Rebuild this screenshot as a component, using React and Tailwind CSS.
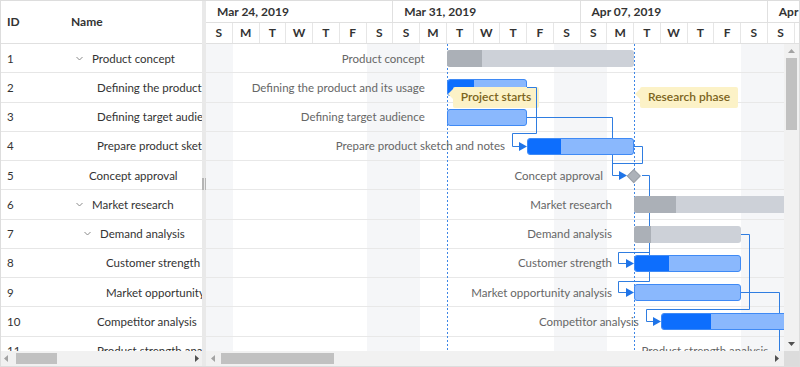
import React from 'react';

// Gantt view: task list on the left, timeline on the right
const DAY = 26.75;
const ROW = 29.25;

const tasks = [
    { id: 1, name: 'Product concept', pad: 'pl-[11px]', chevron: true, type: 'summary', start: 9, end: 16, progress: 1.3 },
    { id: 2, name: 'Defining the product and its usage', pad: 'pl-[32px]', type: 'task', start: 9, end: 12, progress: 0.98 },
    { id: 3, name: 'Defining target audience', pad: 'pl-[32px]', type: 'task', start: 9, end: 12, progress: 0 },
    { id: 4, name: 'Prepare product sketch and notes', pad: 'pl-[32px]', type: 'task', start: 12, end: 16, progress: 1.25 },
    { id: 5, name: 'Concept approval', pad: 'pl-[24px]', type: 'milestone', start: 16 },
    { id: 6, name: 'Market research', pad: 'pl-[11px]', chevron: true, type: 'summary', start: 16, end: 26, progress: 1.57 },
    { id: 7, name: 'Demand analysis', pad: 'pl-[19px]', chevron: true, type: 'summary', start: 16, end: 20, progress: 0.64 },
    { id: 8, name: 'Customer strength', pad: 'pl-[41px]', type: 'task', start: 16, end: 20, progress: 1.27 },
    { id: 9, name: 'Market opportunity analysis', pad: 'pl-[41px]', type: 'task', start: 16, end: 20, progress: 0 },
    { id: 10, name: 'Competitor analysis', pad: 'pl-[32px]', type: 'task', start: 17, end: 24, progress: 1.84 },
    { id: 11, name: 'Product strength analysis', pad: 'pl-[32px]', type: 'task', start: 21.84, end: 26, progress: 0 },
];

const weeks = ['Mar 24, 2019', 'Mar 31, 2019', 'Apr 07, 2019', 'Apr 14, 2019'];
const dayLetters = ['S', 'M', 'T', 'W', 'T', 'F', 'S'];
const days = Array.from({ length: 28 }, (_, i) => dayLetters[i % 7]);
const isWeekend = (i) => i % 7 === 0 || i % 7 === 6;

const center = (i) => ROW * (i + 0.5);

// ─── Small drawings ──────────────────────────────────────────────────────────
const Chevron = () => (
    <svg width="7" height="5" viewBox="0 0 7 5" className="mr-[9px] shrink-0">
        <polyline points="0.5,1 3.5,4 6.5,1" fill="none" stroke="#8a8a8a" strokeWidth="1" />
    </svg>
);

const Arrow = ({ dir, dark }) => {
    const color = dark ? '#505050' : '#a3a3a3';
    const pts = {
        left: '4,0 4,7 0,3.5',
        right: '0,0 0,7 4,3.5',
        up: '0,4 7,4 3.5,0',
        down: '0,0 7,0 3.5,4',
    }[dir];
    const vertical = dir === 'up' || dir === 'down';
    return (
        <svg width={vertical ? 7 : 4} height={vertical ? 4 : 7} className="shrink-0">
            <polygon points={pts} fill={color} />
        </svg>
    );
};

// ─── Left task list ──────────────────────────────────────────────────────────
const TaskList = () => (
    <div className="flex w-[201px] shrink-0 flex-col">
        <div className="flex h-[43px] shrink-0 items-center border-b border-[#e0e0e0] text-[12px] font-bold text-[#333]">
            <div className="w-[64px] shrink-0 pl-[6px]">ID</div>
            <div className="pl-[6px]">Name</div>
        </div>
        <div className="min-h-0 flex-1 overflow-hidden">
            {tasks.map((t) => (
                <div key={t.id} className="flex h-[29.25px] items-center border-b border-[#e6e6e6] text-[11.5px] text-[#333]">
                    <div className="w-[64px] shrink-0 pl-[6px]">{t.id}</div>
                    <div className={`flex min-w-0 flex-1 items-center overflow-hidden whitespace-nowrap ${t.pad}`}>
                        {t.chevron && <Chevron />}
                        <span>{t.name}</span>
                    </div>
                </div>
            ))}
        </div>
        <div className="flex h-[15px] shrink-0 items-center bg-[#f1f1f1] px-[3px]">
            <Arrow dir="left" />
            <div className="ml-[8px] h-[11px] w-[41px] bg-[#c1c1c1]" />
            <div className="flex-1" />
            <Arrow dir="right" dark />
        </div>
    </div>
);

const Splitter = () => (
    <div className="flex w-[4px] shrink-0 items-center justify-center gap-[1px] bg-[#e9e9e9]">
        <div className="h-[12px] w-[1.5px] bg-[#b5b5b5]" />
        <div className="h-[12px] w-[1.5px] bg-[#b5b5b5]" />
    </div>
);

// ─── Timeline pieces ─────────────────────────────────────────────────────────
const TaskBar = ({ t, i }) => {
    const left = t.start * DAY;
    const top = center(i);
    if (t.type === 'milestone') {
        return (
            <div
                className="absolute h-[9.5px] w-[9.5px] rotate-45 border border-[#9da2aa] bg-[#adb2b9]"
                style={{ left: left - 4.75, top: top - 4.75 }}
            />
        );
    }
    const width = (t.end - t.start) * DAY;
    const summary = t.type === 'summary';
    return (
        <div
            className={`absolute flex h-[17px] overflow-hidden rounded-[3px] ${summary ? 'bg-[#cdd1d8]' : 'border border-[#3f8af5] bg-[#8ab8fd]'}`}
            style={{ left, width, top: top - 8.5 }}
        >
            {t.progress > 0 && (
                <div className={`h-full ${summary ? 'bg-[#abb0b7]' : 'bg-[#0d6efd]'}`} style={{ width: t.progress * DAY }} />
            )}
        </div>
    );
};

const TaskLabel = ({ t, i }) => {
    const offset = t.type === 'milestone' ? 31 : 22;
    return (
        <span
            className="absolute -translate-x-full -translate-y-1/2 whitespace-nowrap text-[11.5px] text-[#666]"
            style={{ left: t.start * DAY - offset, top: center(i) }}
        >
            {t.name}
        </span>
    );
};

const Note = ({ className, children }) => (
    <div className={`absolute flex h-[21px] items-center justify-center rounded-[2px] bg-[#fcf2c7] text-[12px] font-semibold text-[#7b6420] ${className}`}>
        <span className="absolute left-[-5px] top-[2px] h-0 w-0 border-y-[5px] border-r-[5px] border-y-transparent border-r-[#fcf2c7]" />
        {children}
    </div>
);

const Connectors = () => (
    <svg className="absolute left-0 top-0" width="577" height="307">
        <g stroke="#3d86e6" strokeWidth="1" strokeDasharray="2 2">
            <line x1="241.5" y1="0" x2="241.5" y2="307" />
            <line x1="428.5" y1="0" x2="428.5" y2="307" />
        </g>
        <g fill="none" stroke="#2f7de1" strokeWidth="1">
            <path d="M321 73.5 H406.5 V131.5 H414" />
            <path d="M428 102.5 H436.5 V119.5 H406.5" />
            <path d="M436 131.5 H443.5 V208.5 H412.5 V219.5 H421" />
            <path d="M443.5 208 V237.5 H412.5 V248.5 H421" />
            <path d="M535 190.5 H543.5 V265.5 H440.5 V277.5 H448" />
            <path d="M535 248.5 H573.5 V310" />
        </g>
        <g fill="#1f74e8">
            <polygon points="413,127 421,131.5 413,136" />
            <polygon points="420,215 428,219.5 420,224" />
            <polygon points="420,244 428,248.5 420,253" />
            <polygon points="447,273 455,277.5 447,282" />
        </g>
    </svg>
);

// this one crosses the "Project starts" note, so it sits above it
const TopConnector = () => (
    <svg className="absolute left-0 top-0" width="577" height="307">
        <path d="M321 43.5 H330.5 V89.5 H306.5 V102.5 H314" fill="none" stroke="#2f7de1" strokeWidth="1" />
        <polygon points="313,98 321,102.5 313,107" fill="#1f74e8" />
    </svg>
);

const Timeline = () => (
    <div className="flex min-w-0 flex-1 flex-col">
        <div className="h-[43px] shrink-0 overflow-hidden text-[12px] font-bold text-[#333]">
            <div className="flex h-[22px] border-b border-[#e0e0e0]">
                {weeks.map((w) => (
                    <div key={w} className="flex w-[187.25px] shrink-0 items-center border-r border-[#e0e0e0] pl-[11px]">
                        {w}
                    </div>
                ))}
            </div>
            <div className="flex h-[21px] border-b border-[#e0e0e0]">
                {days.map((d, i) => (
                    <div key={i} className="flex w-[26.75px] shrink-0 items-center justify-center border-r border-[#e6e6e6]">
                        {d}
                    </div>
                ))}
            </div>
        </div>

        <div className="flex min-h-0 flex-1">
            <div className="relative min-w-0 flex-1 overflow-hidden">
                <div className="absolute inset-0 flex">
                    {days.slice(0, 22).map((_, i) => (
                        <div key={i} className={`h-full w-[26.75px] shrink-0 ${isWeekend(i) ? 'bg-[#f5f6f8]' : ''}`} />
                    ))}
                </div>
                <div className="relative">
                    {tasks.map((t) => (
                        <div key={t.id} className="h-[29.25px] border-b border-[#e8e8e8]" />
                    ))}
                </div>
                <Connectors />
                {tasks.map((t, i) => (
                    <React.Fragment key={t.id}>
                        <TaskLabel t={t} i={i} />
                        <TaskBar t={t} i={i} />
                    </React.Fragment>
                ))}
                <Note className="left-[247px] top-[42.5px] w-[86px]">Project starts</Note>
                <Note className="left-[434px] top-[42.5px] w-[98px]">Research phase</Note>
                <TopConnector />
            </div>
            <div className="flex w-[15px] shrink-0 flex-col items-center bg-[#f1f1f1]">
                <div className="flex h-[14px] items-center">
                    <Arrow dir="up" />
                </div>
                <div className="h-[72px] w-[11px] bg-[#c1c1c1]" />
                <div className="flex-1" />
                <div className="flex h-[15px] items-center">
                    <Arrow dir="down" dark />
                </div>
            </div>
        </div>

        <div className="flex h-[15px] shrink-0">
            <div className="flex flex-1 items-center bg-[#f1f1f1] px-[5px]">
                <Arrow dir="left" />
                <div className="ml-[6px] h-[11px] w-[113px] bg-[#c1c1c1]" />
                <div className="flex-1" />
                <Arrow dir="right" dark />
            </div>
            <div className="w-[15px] bg-[#dcdcdc]" />
        </div>
    </div>
);

export default function App() {
    return (
        <div className="flex h-[367px] w-[800px] overflow-hidden border border-[#dddddd] bg-white font-['Lato','Liberation_Sans',sans-serif]">
            <TaskList />
            <Splitter />
            <Timeline />
        </div>
    );
}
